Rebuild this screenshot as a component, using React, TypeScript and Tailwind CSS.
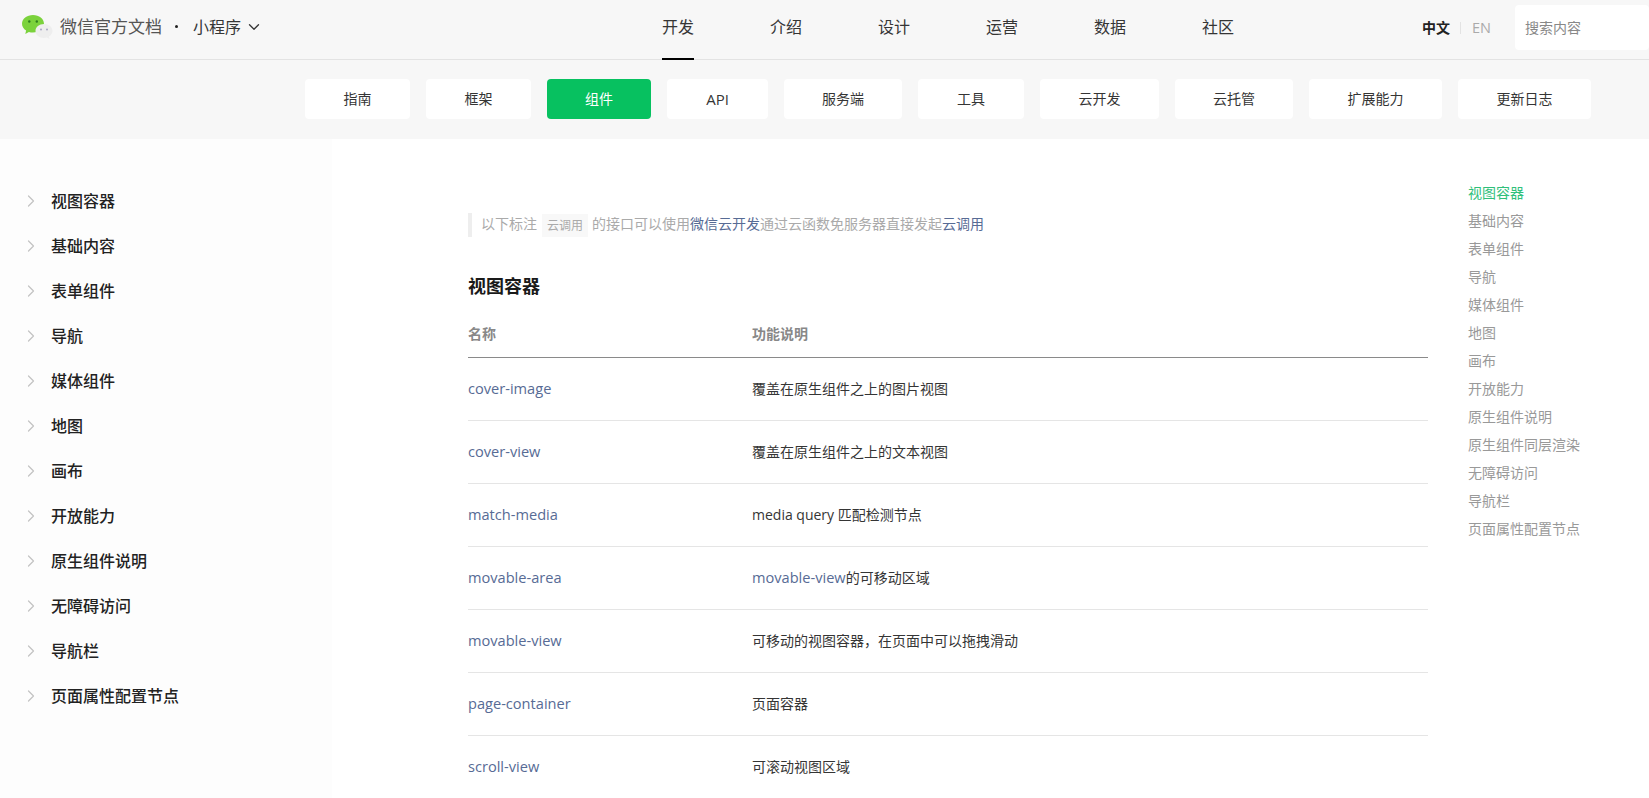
import { ChevronDown, ChevronRight } from "lucide-react";

const topNav = ["开发", "介绍", "设计", "运营", "数据", "社区"];
const subNav = [
  { label: "指南", width: "w-[105px]" },
  { label: "框架", width: "w-[105px]" },
  { label: "组件", width: "w-[104px]" },
  { label: "API", width: "w-[101px] text-[15px]" },
  { label: "服务端", width: "w-[118px]" },
  { label: "工具", width: "w-[106px]" },
  { label: "云开发", width: "w-[119px]" },
  { label: "云托管", width: "w-[118px]" },
  { label: "扩展能力", width: "w-[133px]" },
  { label: "更新日志", width: "w-[133px]" },
];
const sideNav = [
  "视图容器",
  "基础内容",
  "表单组件",
  "导航",
  "媒体组件",
  "地图",
  "画布",
  "开放能力",
  "原生组件说明",
  "无障碍访问",
  "导航栏",
  "页面属性配置节点",
];
const tocNav = [
  "视图容器",
  "基础内容",
  "表单组件",
  "导航",
  "媒体组件",
  "地图",
  "画布",
  "开放能力",
  "原生组件说明",
  "原生组件同层渲染",
  "无障碍访问",
  "导航栏",
  "页面属性配置节点",
];
const rows = [
  { name: "cover-image", desc: "覆盖在原生组件之上的图片视图" },
  { name: "cover-view", desc: "覆盖在原生组件之上的文本视图" },
  { name: "match-media", desc: "media query 匹配检测节点" },
  { name: "movable-area", link: "movable-view", desc: "的可移动区域" },
  { name: "movable-view", desc: "可移动的视图容器，在页面中可以拖拽滑动" },
  { name: "page-container", desc: "页面容器" },
  { name: "scroll-view", desc: "可滚动视图区域" },
];

function Logo() {
  return (
    <svg width="31" height="24" viewBox="0 0 31 24" className="shrink-0">
      <path
        d="M11 0C4.9 0 0 3.9 0 8.8c0 2.8 1.6 5.2 4.1 6.8L3.3 19l3.6-2c1.300.4 2.700.6 4.100.6 6.100 0 11-3.900 11-8.800S17.100 0 11 0z"
        fill="#7bd23c"
      />
      <circle cx="7.300" cy="6.500" r="1.200" fill="#2f7d1e" />
      <circle cx="14.800" cy="6.500" r="1.200" fill="#2f7d1e" />
      <path
        d="M22 9c-4.800 0-8.500 3.100-8.500 7s3.700 7 8.500 7c1 0 2-.1 2.900-.4l2.600 1.400-.6-2.500c2.200-1.300 3.600-3.200 3.600-5.500 0-3.900-3.700-7-8.500-7z"
        fill="#eeeeee"
      />
      <circle cx="19" cy="14.500" r="1" fill="#a9a6c4" />
      <circle cx="25" cy="14.500" r="1" fill="#a9a6c4" />
    </svg>
  );
}

function Header() {
  return (
    <header className="relative h-[60px] flex items-center bg-[#f7f7f7] border-b border-[#e3e3e3]">
      <div className="w-[662px] shrink-0 flex items-center pl-[22px] mb-[6px]">
        <Logo />
        <span className="ml-[7px] text-[17px] leading-[24px] text-[#555]">微信官方文档</span>
        <span className="ml-[13px] w-[3px] h-[3px] rounded-full bg-[#222]" />
        <span className="ml-[15px] text-[16px] leading-[24px] text-[#353535]">小程序</span>
        <ChevronDown size={18} strokeWidth={1.75} className="ml-[4px] text-[#353535]" />
      </div>
      <nav className="flex gap-[76px] h-full">
        {topNav.map((item, i) => (
          <a
            key={item}
            className={
              i === 0
                ? "h-[60px] leading-[54px] text-[16px] text-[#353535] border-b-2 border-black"
                : "h-[60px] leading-[54px] text-[16px] text-[#353535]"
            }
          >
            {item}
          </a>
        ))}
      </nav>
      <div className="ml-auto flex items-center">
        <span className="text-[14px] font-bold text-[#222] leading-[20px] mb-[4px]">中文</span>
        <span className="ml-[10px] mr-[11px] w-px h-[12px] bg-[#e3e3e3] mb-[4px]" />
        <span className="text-[14.500px] text-[#aaa] leading-[20px] mb-[4px]">EN</span>
        <div className="ml-[24px] w-[134px] h-[45px] mb-[4px] pb-[1px] bg-white rounded-sm flex items-center pl-[10px] text-[14px] text-[#888]">
          搜索内容
        </div>
      </div>
    </header>
  );
}

function SubNav() {
  return (
    <div className="h-[79px] bg-[#f7f7f7] flex justify-end gap-[16px] pr-[58px] pt-[19px]">
      {subNav.map((item) => (
        <a
          key={item.label}
          className={
            item.label === "组件"
              ? `h-[40px] text-center leading-[40px] text-[14px] rounded bg-[#07c160] text-white ${item.width}`
              : `h-[40px] text-center leading-[40px] text-[14px] rounded bg-white text-[#353535] ${item.width}`
          }
        >
          {item.label}
        </a>
      ))}
    </div>
  );
}

function Sidebar() {
  return (
    <aside className="w-[332px] shrink-0 bg-[#fdfdfd] pt-[39px]">
      <ul>
        {sideNav.map((item) => (
          <li key={item} className="h-[45px] flex items-center pl-[21px]">
            <ChevronRight size={20} strokeWidth={1.500} className="text-[#c4c4c4]" />
            <span className="ml-[10px] text-[16px] font-medium text-[#222]">{item}</span>
          </li>
        ))}
      </ul>
    </aside>
  );
}

function Content() {
  return (
    <main className="w-[960px] shrink-0 ml-[136px] pt-[74px]">
      <div className="h-[24px] flex items-center border-l-4 border-[#eee] pl-[9px] pb-[4px] text-[14px] text-[#aaa]">
        以下标注
        <code className="ml-[5px] mr-[4px] -mb-[4px] h-[23px] px-[5px] bg-[#f8f8f8] text-[12px] leading-[23px] text-[#aaa] font-[inherit]">
          云调用
        </code>
        的接口可以使用<a className="text-[#576b95]">微信云开发</a>通过云函数免服务器直接发起
        <a className="text-[#576b95]">云调用</a>
      </div>
      <h2 className="mt-[36px] text-[18px] leading-[27px] font-bold text-[#1a1a1a]">视图容器</h2>
      <table className="mt-[11px] w-full table-fixed text-left text-[14px]">
        <thead>
          <tr className="h-[46px] border-b border-[#8a8a8a]">
            <th className="w-[284px] font-bold text-[#888]">名称</th>
            <th className="font-bold text-[#888]">功能说明</th>
          </tr>
        </thead>
        <tbody>
          {rows.map((row) => (
            <tr key={row.name} className="h-[63px] border-b border-[#e5e5e5]">
              <td className="text-[14.600px] text-[#576b95]">{row.name}</td>
              <td className="text-[#353535]">
                {row.link && <a className="text-[14.600px] text-[#576b95]">{row.link}</a>}
                {row.desc}
              </td>
            </tr>
          ))}
        </tbody>
      </table>
    </main>
  );
}

function Toc() {
  return (
    <ul className="ml-[40px] pt-[40px]">
      {tocNav.map((item, i) => (
        <li
          key={item}
          className={
            i === 0
              ? "h-[28px] leading-[28px] text-[14px] text-[#2fc07a]"
              : "h-[28px] leading-[28px] text-[14px] text-[#999]"
          }
        >
          {item}
        </li>
      ))}
    </ul>
  );
}

export default function App() {
  return (
    <div className="h-[798px] overflow-hidden bg-white font-['Open_Sans','Noto_Sans_CJK_SC',sans-serif]">
      <Header />
      <SubNav />
      <div className="flex h-[659px]">
        <Sidebar />
        <Content />
        <Toc />
      </div>
    </div>
  );
}
